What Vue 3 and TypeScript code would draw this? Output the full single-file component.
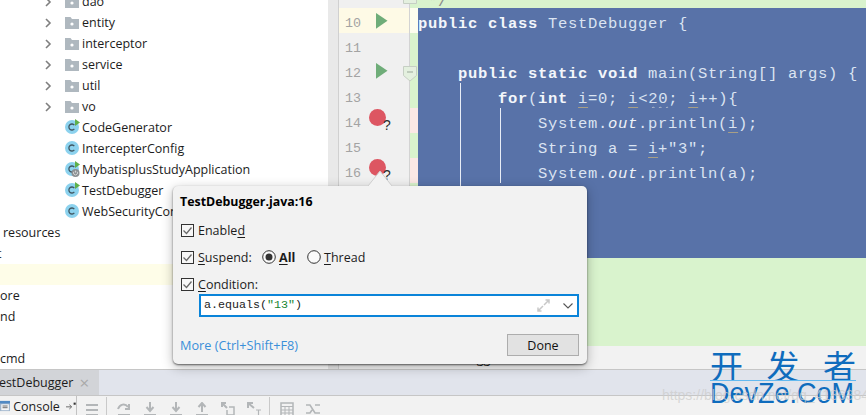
<script setup lang="ts">
interface Seg { t: string; c?: string }
interface Line {
  n: number
  strip: string
  run?: boolean
  bp?: boolean
  guides?: number
  segs: Seg[]
  indent?: number
  active?: boolean
}

const b = (t: string): Seg => ({ t, c: 'kw' })
const p = (t: string): Seg => ({ t })
const u = (t: string): Seg => ({ t, c: 'var' })
const it = (t: string): Seg => ({ t, c: 'ital' })
const w = (t: string): Seg => ({ t, c: 'wavy' })

const lines: Line[] = [
  { n: 10, strip: 'cream', run: true, active: true, segs: [b('public class'), p(' TestDebugger {')] },
  { n: 11, strip: 'green', segs: [] },
  { n: 12, strip: 'green', run: true, indent: 4, segs: [b('public static void'), p(' main(String[] args) {')] },
  { n: 13, strip: 'green', guides: 1, indent: 8, segs: [b('for'), p('('), b('int'), p(' '), u('i'), p('=0; '), u('i'), p('<'), w('20'), p('; '), u('i'), p('++){')] },
  { n: 14, strip: 'pink', bp: true, guides: 2, indent: 12, segs: [p('System.'), it('out'), p('.println('), u('i'), p(');')] },
  { n: 15, strip: 'green', guides: 2, indent: 12, segs: [p('String a = '), u('i'), p('+"3";')] },
  { n: 16, strip: 'pink', bp: true, guides: 2, indent: 12, segs: [p('System.'), it('out'), p('.println(a);')] },
  { n: 17, strip: 'green', guides: 1, segs: [] },
  { n: 18, strip: 'green', segs: [] },
  { n: 19, strip: 'green', segs: [] }
]

const folders = ['dao', 'entity', 'interceptor', 'service', 'util', 'vo']
const classes = [
  { name: 'CodeGenerator', run: true, spring: false },
  { name: 'IntercepterConfig', run: false, spring: false },
  { name: 'MybatisplusStudyApplication', run: true, spring: true },
  { name: 'TestDebugger', run: true, spring: false },
  { name: 'WebSecurityConfig', run: false, spring: false }
]
</script>

<template>
  <div class="ide">
    <div class="main">
      <aside class="tree">
        <div v-for="f in folders" :key="f" class="row">
          <svg class="chev" width="8" height="10" viewBox="0 0 8 10"><path d="M2 1l4 4-4 4" fill="none" stroke="#7f7f7f" stroke-width="1.6" /></svg>
          <svg class="folder" width="14" height="12" viewBox="0 0 14 12">
            <path d="M0 0h5.5l1.5 2h7v10H0z" fill="#afb8bf" />
            <circle cx="7" cy="7" r="1.6" fill="#fff" />
          </svg>
          <span>{{ f }}</span>
        </div>
        <div v-for="c in classes" :key="c.name" class="row">
          <svg class="cls" width="17" height="18" viewBox="0 0 17 18">
            <circle cx="7" cy="10" r="7" fill="#8cd2ee" />
            <path d="M9.3 8.2a3 3 0 1 0 0 3.6" fill="none" stroke="#3f5560" stroke-width="1.3" />
            <path v-if="c.run" d="M10 2l5 3.5-5 3.5z" fill="#5fb04a" />
            <template v-if="c.spring">
              <circle cx="10.5" cy="14" r="4" fill="#8b8f92" />
              <path d="M10.5 11.6v2M9 12.6a2 2 0 1 0 3 0" fill="none" stroke="#e8e8e8" stroke-width=".8" />
            </template>
          </svg>
          <span>{{ c.name }}</span>
        </div>
        <div class="row cut res"><span>resources</span></div>
        <div class="row cut"><span class="t">t</span></div>
        <div class="row cut hl"></div>
        <div class="row cut"><span>ore</span></div>
        <div class="row cut"><span>nd</span></div>
        <div class="row cut"></div>
        <div class="row cut"><span>cmd</span></div>
      </aside>
      <div class="sbar"></div>
      <section class="editor">
        <div class="codearea">
          <div class="line partial">
            <div class="gut"><span class="num">9</span></div>
            <div class="strip green"></div>
            <div class="code plain"><span class="cmt">&nbsp;*/</span></div>
          </div>
          <div v-for="l in lines" :key="l.n" class="line">
            <div class="gut" :class="{ active: l.active }">
              <span class="num">{{ l.n }}</span>
              <svg v-if="l.run" class="run" width="12" height="16" viewBox="0 0 12 16"><path d="M0 0l11.500 7.800L0 15.800z" fill="#6fad79" /></svg>
              <span v-if="l.bp" class="bp"></span>
              <span v-if="l.bp" class="q">?</span>
            </div>
            <div class="strip" :class="l.strip"></div>
            <div class="code sel">
              <i v-if="l.guides" class="guide g1"></i>
              <i v-if="l.guides === 2" class="guide g2"></i>
              <span v-if="l.indent" class="pad">{{ ' '.repeat(l.indent) }}</span><span v-for="(s, i) in l.segs" :key="i" :class="s.c">{{ s.t }}</span>
            </div>
          </div>
          <div class="line filler">
            <div class="gut"></div>
            <div class="strip green"></div>
            <div class="code plain"></div>
          </div>
          <svg class="fold f0" width="14" height="4" viewBox="0 0 14 4"><path d="M.5 0v3.500h13V0" fill="#e4f0df" stroke="#c6cfc4" /></svg>
          <svg class="fold f1" width="14" height="16" viewBox="0 0 14 16"><path d="M.5.5h13v9l-6.500 5.500-6.500-5.500z" fill="#e4f0df" stroke="#c6cfc4" /><path d="M4 6h6" stroke="#9aa79a" /></svg>
        </div>
        <div class="crumbs"><span>TestDebugger</span></div>
      </section>
    </div>

    <div class="tabs">
      <div class="tab"><span class="tabname">TestDebugger</span><span class="x">×</span></div>
    </div>
    <div class="tools">
      <div class="console">
        <svg width="12" height="12" viewBox="0 0 12 12"><rect width="12" height="12" fill="#9fb5cc" /><rect y="0" width="12" height="3" fill="#4f89c4" /><rect x="1.500" y="4" width="9" height="7" fill="#f4f6f8" /><path d="M3 6h6M3 8h6" stroke="#555" /></svg>
        <span>Console</span>
        <svg width="12" height="10" viewBox="0 0 12 10"><path d="M0 6h6M4 3.500L6.800 6 4 8.500" fill="none" stroke="#555" /><rect x="9" y="1" width="2.500" height="2.500" fill="#333" /></svg>
      </div>
      <div class="tgroup first">
        <svg width="14" height="14" viewBox="0 0 14 14"><path d="M1 3h12M1 8h12M1 13h12" stroke="#b3b6b8" stroke-width="2" /></svg>
      </div>
      <div class="tgroup mid">
        <svg width="14" height="14" viewBox="0 0 14 14"><path d="M1 7c2-5 7-6 10-2M12 2v5H8" fill="none" stroke="#b3b6b8" stroke-width="2" /><path d="M1 13h12" stroke="#b3b6b8" stroke-width="2" /></svg>
        <svg width="14" height="14" viewBox="0 0 14 14"><path d="M7 0v8M3.500 5L7 9l3.500-4" fill="none" stroke="#b3b6b8" stroke-width="2" /><path d="M1 13h12" stroke="#b3b6b8" stroke-width="2" /></svg>
        <svg width="14" height="14" viewBox="0 0 14 14"><path d="M7 0v8M3.500 5L7 9l3.500-4" fill="none" stroke="#b3b6b8" stroke-width="2" /><path d="M1 13h12" stroke="#b3b6b8" stroke-width="2" /></svg>
        <svg width="14" height="14" viewBox="0 0 14 14"><path d="M7 10V2M3.500 5L7 1l3.500 4" fill="none" stroke="#b3b6b8" stroke-width="2" /><path d="M1 13h12" stroke="#b3b6b8" stroke-width="2" /></svg>
        <svg width="14" height="14" viewBox="0 0 14 14"><path d="M1 1l5 5M1 5V1h4" fill="none" stroke="#b3b6b8" stroke-width="2" /><path d="M8 5h5v8H6V8" fill="none" stroke="#b3b6b8" stroke-width="1.500" /></svg>
        <svg width="14" height="14" viewBox="0 0 14 14"><path d="M1 1l6 5M1 6V1h5" fill="none" stroke="#b3b6b8" stroke-width="2" /><path d="M9 8h5M11.500 8v6" stroke="#b3b6b8" stroke-width="1.200" /></svg>
      </div>
      <div class="tgroup mid2">
        <svg width="14" height="14" viewBox="0 0 14 14"><rect x="1" y="1" width="12" height="13" fill="none" stroke="#b3b6b8" stroke-width="1.500" /><path d="M1 4.500h12M1 8h12M1 11h12M5 4.500V14M9 4.500V14" stroke="#b3b6b8" /></svg>
        <svg width="14" height="14" viewBox="0 0 14 14"><path d="M0 3h4l5 8h5M0 11h4l2-3M9 3h5" fill="none" stroke="#b3b6b8" stroke-width="1.600" /></svg>
      </div>
    </div>

    <div class="popup">
      <svg class="beak" width="26" height="17" viewBox="0 0 26 17"><path d="M0 16.500L12 1l12 15.500z" fill="#f2f2f2" /><path d="M0 16L12 1l12 15" fill="none" stroke="#cfcfcf" /></svg>
      <div class="title">TestDebugger.java:16</div>
      <div class="prow r1">
        <label class="chk"><svg width="13" height="13" viewBox="0 0 13 13"><rect x=".5" y=".5" width="12" height="12" fill="#f7f7f7" stroke="#333" /><path d="M2.500 6.500l3 3 5-6" fill="none" stroke="#6a6a6a" stroke-width="1.300" /></svg></label>
        <span>Enable<u>d</u></span>
      </div>
      <div class="prow r2">
        <label class="chk"><svg width="13" height="13" viewBox="0 0 13 13"><rect x=".5" y=".5" width="12" height="12" fill="#f7f7f7" stroke="#333" /><path d="M2.500 6.500l3 3 5-6" fill="none" stroke="#6a6a6a" stroke-width="1.300" /></svg></label>
        <span class="suspend"><u>S</u>uspend:</span>
        <svg width="14" height="14" viewBox="0 0 14 14"><circle cx="7" cy="7" r="6.300" fill="#fafafa" stroke="#333" /><circle cx="7" cy="7" r="3.500" fill="#333" /></svg>
        <b class="all"><u>A</u>ll</b>
        <svg width="14" height="14" viewBox="0 0 14 14"><circle cx="7" cy="7" r="6.300" fill="#fafafa" stroke="#333" /></svg>
        <span class="thr"><u>T</u>hread</span>
      </div>
      <div class="prow r3">
        <label class="chk"><svg width="13" height="13" viewBox="0 0 13 13"><rect x=".5" y=".5" width="12" height="12" fill="#f7f7f7" stroke="#333" /><path d="M2.500 6.500l3 3 5-6" fill="none" stroke="#6a6a6a" stroke-width="1.300" /></svg></label>
        <span><u>C</u>ondition:</span>
      </div>
      <div class="input">
        <span class="expr">a.equals(<em>"13"</em>)</span>
        <svg class="exp" width="13" height="13" viewBox="0 0 13 13"><path d="M7 6l5-5M8.500 1H12v3.500M6 7l-5 5M4.500 12H1V8.500" fill="none" stroke="#c8c8c8" stroke-width="1.500" /></svg>
        <svg class="dd" width="10" height="6" viewBox="0 0 10 6"><path d="M.5.5L5 5 9.500.5" fill="none" stroke="#555" stroke-width="1.100" /></svg>
      </div>
      <div class="foot">
        <a class="more">More (Ctrl+Shift+F8)</a>
        <button class="done">Done</button>
      </div>
    </div>

    <div class="mark">
      <div class="cn"><span>开</span><span>发</span><span>者</span></div>
      <div class="en">DevZe.CoM</div>
    </div>
    <div class="wm">https://blog.csdn.net/qq_41863849</div>
  </div>
</template>

<style scoped>
.ide {
  position: relative;
  width: 866px;
  height: 415px;
  overflow: hidden;
  background: #f2f2f2;
  display: flex;
  flex-direction: column;
  font-family: "Open Sans", "Liberation Sans", sans-serif;
  font-size: 12.500px;
  color: #1c1c1c;
}
.main { height: 369px; display: flex; flex: none; overflow: hidden; }
.tree {
  width: 328px;
  flex: none;
  background: #fff;
  margin-top: -9px;
}
.row {
  height: 21px;
  display: flex;
  align-items: center;
  padding-left: 44px;
  white-space: nowrap;
  font-size: 12.500px;
}
.chev { margin-right: 13px; flex: none; }
.folder { margin-right: 3px; flex: none; }
.cls { margin-left: 21px; margin-top: -3px; flex: none; }
.row.cut { padding-left: 0; }
.row.res { padding-left: 3px; }
.row.cut .t { margin-left: -3px; }
.row.cut.hl { background: #fefde8; }
.sbar { width: 10px; flex: none; background: #e9e9e9; border-right: 1px solid #d0d0d0; }
.editor { flex: 1; display: flex; flex-direction: column; min-width: 0; }
.codearea { position: relative; height: 346px; flex: none; display: flex; flex-direction: column; overflow: hidden; }
.line { height: 25px; flex: none; display: flex; }
.line.partial { height: 8px; overflow: hidden; }
.line.partial .cmt { position: relative; top: -14px; }
.line.filler { flex: 1; height: auto; }
.gut {
  position: relative;
  width: 71px;
  flex: none;
  background: #f0f0f0;
  border-right: 1px solid #d3d3d3;
  box-sizing: border-box;
}
.gut.active { background: #fefae6; }
.num {
  position: absolute;
  top: 3px;
  left: 6px;
  font: 13.330px/25px "Liberation Mono", monospace;
  color: #a3a3a3;
}
.line.partial .num { left: 14px; top: -16px; }
.run { position: absolute; left: 37px; top: 5px; }
.bp {
  position: absolute;
  left: 30px;
  top: 1px;
  width: 17px;
  height: 17px;
  border-radius: 50%;
  background: #dd5662;
}
.q {
  position: absolute;
  left: 44px;
  top: 9px;
  font: 14px/16px "Liberation Sans", sans-serif;
  color: #2c2c2c;
}
.strip { width: 8px; flex: none; }
.strip.green { background: #d9f3cd; }
.strip.pink { background: #fbe8e5; }
.strip.cream { background: #fdfdee; }
.code {
  position: relative;
  flex: 1;
  font: 15.500px/25px "Liberation Mono", monospace;
  letter-spacing: .7px;
  white-space: pre;
  padding-top: 3.500px;
  box-sizing: border-box;
  min-width: 0;
}
.code.sel { background: #5872a8; color: #dbe4f2; }
.code.plain { background: #d9f3cd; color: #8a8a8a; }
.kw { font-weight: 700; color: #f3f6fb; }
.ital { font-style: italic; color: #f0f3f9; }
.var { text-decoration: underline; text-decoration-color: #a89f86; text-underline-offset: 4px; }
.wavy { text-decoration: underline wavy #b4bccb 1px; text-underline-offset: 3px; }
.guide { position: absolute; top: 0; bottom: 0; width: 1px; background: #e8edf6; }
.g1 { left: 42px; }
.g2 { left: 82px; }
.fold { position: absolute; left: 64px; }
.f0 { top: 0; }
.f1 { top: 66px; }
.crumbs {
  flex: 1;
  background: #f2f2f2;
  padding: 2px 0 0 82px;
  font-size: 12.500px;
  line-height: 21px;
}
.tabs {
  height: 27px;
  flex: none;
  box-sizing: border-box;
  background: #e1e4ec;
  border-top: 1px solid #c6c6c6;
  border-bottom: 1px solid #c6c6c6;
  display: flex;
}
.tab {
  width: 99px;
  background: #d2d4d8;
  display: flex;
  align-items: center;
  font-size: 12.500px;
  overflow: hidden;
  white-space: nowrap;
}
.tabname { margin-left: -8px; }
.x { margin-left: 6px; color: #a9a9a9; font-size: 17px; line-height: 1; }
.tools { flex: 1; display: flex; align-items: flex-start; background: #f2f2f2; }
.console {
  width: 77px;
  height: 20px;
  flex: none;
  box-sizing: border-box;
  border-right: 1px solid #c2c2c2;
  display: flex;
  align-items: center;
  gap: 3px;
  font-size: 12.500px;
}
.console svg:last-child { margin-left: 3px; }
.tgroup { height: 20px; display: flex; align-items: flex-end; flex: none; box-sizing: border-box; margin-top: 1px; }
.tgroup svg { flex: none; }
.first { width: 30px; padding-left: 8px; border-right: 1px solid #c9c9c9; height: 19px; }
.mid { width: 163px; padding-left: 10px; gap: 12px; border-right: 1px solid #c9c9c9; height: 19px; }
.mid2 { padding-left: 10px; gap: 12px; height: 19px; }
.popup {
  position: absolute;
  left: 173px;
  top: 186px;
  width: 414px;
  height: 178px;
  box-sizing: border-box;
  background: #f2f2f2;
  border-radius: 5px;
  box-shadow: 0 1px 2px rgba(0, 0, 0, .55), 0 3px 12px rgba(0, 0, 0, .28);
  padding: 7px 7px 8px 7px;
  display: flex;
  flex-direction: column;
  font-size: 12.500px;
}
.beak { position: absolute; left: 195px; top: -16px; }
.title { font-weight: 700; font-size: 12.400px; line-height: 18px; color: #000; }
.prow { display: flex; align-items: center; height: 18px; white-space: nowrap; }
.chk { display: flex; margin: 0 4px 0 1px; }
.r1 { margin-top: 10px; }
.r2 { margin-top: 9px; }
.r3 { margin-top: 9px; }
.suspend { width: 64px; }
.all { margin-left: 3px; width: 28px; }
.thr { margin-left: 3px; }
u { text-underline-offset: 2px; }
.input {
  margin: 1px 0 0 19px;
  width: 380px;
  height: 23px;
  flex: none;
  box-sizing: border-box;
  border: 2px solid #0a84d9;
  background: #fff;
  display: flex;
  align-items: center;
  padding: 0 4px 0 3px;
}
.expr { font: 11.670px/19px "Liberation Mono", monospace; flex: 1; }
.expr em { font-style: normal; color: #16852e; }
.dd { margin-left: 13px; }
.foot { flex: 1; display: flex; align-items: flex-end; justify-content: space-between; padding-right: 1px; }
.more { color: #3a8fd9; line-height: 20px; margin-bottom: 1px; font-size: 12.700px; }
.done {
  width: 72px;
  height: 22px;
  padding: 0;
  border: 1px solid #adadad;
  background: #e2e2e2;
  font: inherit;
  color: #111;
}
.mark { position: absolute; left: 710px; top: 347px; width: 146px; color: #0f6cbd; }
.cn {
  display: flex;
  justify-content: space-between;
  font: 33px/36px "Noto Sans CJK SC", sans-serif;
  border-bottom: 1px solid #63b9f0;
  height: 33px;
  overflow: hidden;
}
.en {
  font: 30px/24px "Liberation Sans", sans-serif;
  white-space: nowrap;
  transform: scaleX(.9);
  transform-origin: left center;
}
.wm {
  position: absolute;
  left: 662px;
  top: 386px;
  font: 14px/18px "Liberation Sans", sans-serif;
  color: rgba(205, 205, 205, .75);
  white-space: nowrap;
}
</style>
